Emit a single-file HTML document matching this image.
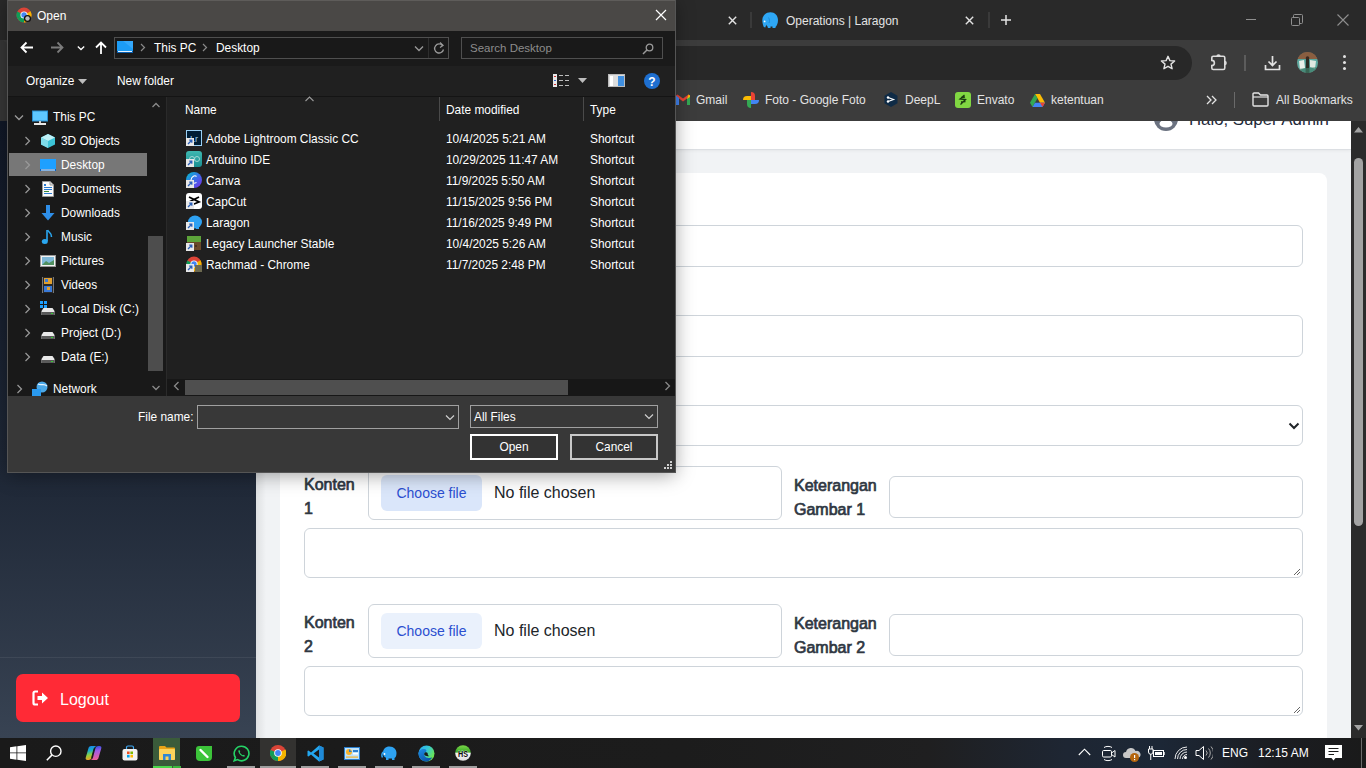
<!DOCTYPE html>
<html><head><meta charset="utf-8">
<style>
*{box-sizing:border-box;margin:0;padding:0}
html,body{width:1366px;height:768px;overflow:hidden;background:#292929;font-family:"Liberation Sans",sans-serif}
.a{position:absolute}
#tabs{left:0;top:0;width:1366px;height:40px;background:#292929}
#toolbar{left:0;top:40px;width:1366px;height:81px;background:#3c3c3c}
#omni{left:100px;top:46px;width:1092px;height:34px;border-radius:17px;background:#282828}
.w{color:#e3e3e3;font-size:12px;white-space:nowrap}
#page{left:0;top:121px;width:1351px;height:617px;background:#f1f3f5;overflow:hidden}
#sidebar{left:0;top:0;width:256px;height:617px;background:linear-gradient(#111827,#1f2837 58%,#384353)}
#header{left:256px;top:0;width:1095px;height:29px;background:#fff;border-bottom:1px solid #dcdfe3;box-shadow:0 1px 3px rgba(0,0,0,.05)}
#card{left:280px;top:52px;width:1047px;height:700px;background:#fff;border-radius:8px}
.inp{position:absolute;border:1px solid #ced4da;border-radius:6px;background:#fff}
.lbl{position:absolute;font-size:16px;color:#343a40;line-height:24px;-webkit-text-stroke:0.7px #2f3742;color:#2f3742}
#sb{left:1351px;top:121px;width:15px;height:617px;background:#2b2b2b}
#taskbar{left:0;top:738px;width:1366px;height:30px;background:linear-gradient(90deg,#1a1a1a,#1c1c1c 50%,#1f1f20 68%,#1e2633 78%,#1c2736 85%,#1b1d22 93%,#1a1a1a)}
#dlg{left:8px;top:0;width:667px;height:472px;background:#383838;box-shadow:0 0 0 1px #555,0 3px 18px rgba(0,0,0,.38);overflow:hidden}
.d{color:#fff;font-size:11.9px;white-space:nowrap;position:absolute}
</style></head><body>
<div id="tabs" class="a"></div>
<div id="toolbar" class="a"></div>
<div id="omni" class="a"></div>
<div class="a" style="left:0;top:40px;width:8px;height:81px;background:#373737;border-top-right-radius:8px"></div>
<!-- tabs -->
<svg class="a" style="left:728px;top:16px" width="9" height="9"><path d="M0.8 0.8L8.2 8.2M8.2 0.8L0.8 8.2" stroke="#e3e3e3" stroke-width="1.4"/></svg>
<div class="a" style="left:750px;top:12px;width:2px;height:16px;background:#3a3a3a"></div>
<svg class="a" style="left:761px;top:11px" width="18" height="18" viewBox="0 0 18 18"><path d="M9.5 1.2C13.8 1.2 17 4.5 17 9C17 12.5 15.8 14.8 14.5 16V17H11.5V15.5H9.5V17H6.8V15.8C5.8 15.2 5.5 14.5 5.3 13.5L4.3 16.5L2.8 16C2.2 14.5 1.3 12 1.3 9.5C1.3 4.5 5 1.2 9.5 1.2Z" fill="#2ea7f5"/><circle cx="3.6" cy="10.4" r="0.9" fill="#fff"/><path d="M7.5 6.5C8.5 8.5 9 10 8 12" stroke="#1a84cf" stroke-width="0.8" fill="none"/></svg>
<div class="w a" style="left:786px;top:13px;line-height:16px;font-size:12px;color:#e3e3e3">Operations | Laragon</div>
<svg class="a" style="left:965px;top:16px" width="9" height="9"><path d="M0.8 0.8L8.2 8.2M8.2 0.8L0.8 8.2" stroke="#e3e3e3" stroke-width="1.4"/></svg>
<div class="a" style="left:988px;top:12px;width:2px;height:16px;background:#3a3a3a"></div>
<svg class="a" style="left:1001px;top:15px" width="10" height="10"><path d="M5 0V10M0 5H10" stroke="#e3e3e3" stroke-width="1.5"/></svg>
<div class="a" style="left:1246px;top:19px;width:10px;height:1px;background:#8f8f8f"></div>
<svg class="a" style="left:1291px;top:14px" width="12" height="12"><path d="M2.5 3.5V1.5A1 1 0 0 1 3.5 0.5H10.5A1 1 0 0 1 11.5 1.5V8.5A1 1 0 0 1 10.5 9.5H8.5" stroke="#8f8f8f" fill="none"/><rect x="0.5" y="3.5" width="8" height="8" rx="1" stroke="#8f8f8f" fill="none"/></svg>
<svg class="a" style="left:1337px;top:14px" width="12" height="12"><path d="M0.5 0.5L11.5 11.5M11.5 0.5L0.5 11.5" stroke="#8f8f8f" stroke-width="1.1"/></svg>
<!-- toolbar -->
<svg class="a" style="left:1160px;top:55px" width="16" height="16" viewBox="0 0 16 16"><path d="M8 1.3L9.9 5.6L14.6 6L11 9.1L12.1 13.7L8 11.3L3.9 13.7L5 9.1L1.4 6L6.1 5.6Z" stroke="#e3e3e3" stroke-width="1.4" fill="none" stroke-linejoin="round"/></svg>
<svg class="a" style="left:1210px;top:52px" width="20" height="20" viewBox="0 0 20 20"><path d="M3.3 4.3H13.3A1.5 1.5 0 0 1 14.8 5.8V16A1.5 1.5 0 0 1 13.3 17.5H3.3A1.5 1.5 0 0 1 1.8 16V13.6A2.6 2.6 0 0 0 1.8 8.4V5.8A1.5 1.5 0 0 1 3.3 4.3Z" stroke="#dcdcdc" stroke-width="1.6" fill="none"/><path d="M6.3 4.5A2.2 2.2 0 0 1 10.7 4.5Z" fill="#dcdcdc"/><path d="M14.6 8.8A2.2 2.2 0 0 1 14.6 13.2Z" fill="#dcdcdc"/></svg>
<div class="a" style="left:1244px;top:55px;width:2px;height:16px;background:#5c5c5c"></div>
<svg class="a" style="left:1264px;top:55px" width="17" height="16" viewBox="0 0 17 16"><path d="M8.5 1V10M4.5 6.5L8.5 10.5L12.5 6.5M1.5 10V14.5H15.5V10" stroke="#e3e3e3" stroke-width="1.7" fill="none"/></svg>
<svg class="a" style="left:1297px;top:52px" width="21" height="21" viewBox="0 0 21 21"><defs><clipPath id="av"><circle cx="10.5" cy="10.5" r="10.5"/></clipPath></defs><g clip-path="url(#av)"><rect width="21" height="21" fill="#7a6a58"/><rect y="0" width="21" height="7" fill="#8a5e40"/><path d="M0 7H21V21H0Z" fill="#5aa8a0"/><path d="M2 9L7 8L8 16L3 18Z" fill="#e8efe8"/><path d="M13 8L19 9L18 17L13 15Z" fill="#dfe8e0"/><path d="M9 6H12L12.5 21H8.5Z" fill="#2a2a22"/><circle cx="10.5" cy="6" r="1.8" fill="#3a2a20"/><path d="M0 17L21 15V21H0Z" fill="#3f7f6a" opacity=".7"/></g></svg>
<div class="a" style="left:1343px;top:55px;width:3px;height:3px;border-radius:50%;background:#e3e3e3;box-shadow:0 6px 0 #e3e3e3,0 12px 0 #e3e3e3"></div>
<!-- bookmarks -->
<svg class="a" style="left:676px;top:94px" width="14" height="11" viewBox="0 0 14 11"><path d="M0 1.5V11H3V4.5L7 7.5L11 4.5V11H14V1.5L12.5 0.5L7 4.5L1.5 0.5Z" fill="#ea4335"/><path d="M0 1.5V11H3V4Z" fill="#4285f4"/><path d="M11 4V11H14V1.5Z" fill="#34a853"/><path d="M12.5 0.5L14 1.5V3L11 5Z" fill="#fbbc04"/></svg>
<div class="w a" style="left:696px;top:92px;line-height:16px">Gmail</div>
<svg class="a" style="left:743px;top:92px" width="16" height="16" viewBox="0 0 16 16"><path d="M4 8A4 4 0 0 1 8 4V8Z" fill="#fbbc04"/><path d="M8 0A4 4 0 0 1 12 4V8H8Z" fill="#ea4335"/><path d="M8 8H16A4 4 0 0 1 12 12H8Z" fill="#4285f4"/><path d="M8 8V16A4 4 0 0 1 4 12V8Z" fill="#34a853"/><path d="M0 8A4 4 0 0 1 4 4H8V8Z" fill="#fbbc04"/></svg>
<div class="w a" style="left:765px;top:92px;line-height:16px">Foto - Google Foto</div>
<svg class="a" style="left:884px;top:92px" width="14" height="15" viewBox="0 0 14 15"><path d="M7 0L13.5 3.7V11.3L7 15L0.5 11.3V3.7Z" fill="#0f2b46"/><path d="M4 5.5L9.5 7.5L4 9.5" stroke="#fff" stroke-width="1.2" fill="none"/><circle cx="4" cy="5.5" r="1.2" fill="#fff"/><circle cx="4" cy="9.5" r="1.2" fill="#fff"/></svg>
<div class="w a" style="left:905px;top:92px;line-height:16px">DeepL</div>
<svg class="a" style="left:955px;top:92px" width="16" height="16" viewBox="0 0 16 16"><rect width="16" height="16" rx="3" fill="#81d742"/><path d="M9.5 3L5 7L10.5 7.5L5.5 12.5M6 5.5L10 5M6 10L10.5 9.5" stroke="#1a3a10" stroke-width="1.3" fill="none"/></svg>
<div class="w a" style="left:977px;top:92px;line-height:16px">Envato</div>
<svg class="a" style="left:1030px;top:94px" width="15" height="13" viewBox="0 0 15 13"><path d="M5 0H10L15 8.7H10Z" fill="#fbbc04"/><path d="M5 0L0 8.7L2.5 13L7.5 4.3Z" fill="#34a853"/><path d="M2.5 13H12.5L15 8.7H5Z" fill="#4285f4"/><path d="M12.5 13L15 8.7H10Z" fill="#ea4335"/></svg>
<div class="w a" style="left:1051px;top:92px;line-height:16px">ketentuan</div>
<svg class="a" style="left:1206px;top:95px" width="12" height="10"><path d="M1 1L5 5L1 9M6 1L10 5L6 9" stroke="#e3e3e3" stroke-width="1.3" fill="none"/></svg>
<div class="a" style="left:1234px;top:92px;width:1px;height:16px;background:#6a6a6a"></div>
<svg class="a" style="left:1252px;top:92px" width="17" height="15" viewBox="0 0 17 15"><path d="M1 2A1 1 0 0 1 2 1H6.5L8.5 3H15A1 1 0 0 1 16 4V13A1 1 0 0 1 15 14H2A1 1 0 0 1 1 13Z" stroke="#e3e3e3" stroke-width="1.4" fill="none"/><path d="M1 5H16" stroke="#e3e3e3" stroke-width="1.2"/></svg>
<div class="w a" style="left:1276px;top:92px;line-height:16px">All Bookmarks</div>

<div id="page" class="a">
  <div id="sidebar" class="a"></div>
  <div class="a" style="left:256px;top:0;width:10px;height:617px;background:linear-gradient(90deg,rgba(0,0,0,.08),rgba(0,0,0,0))"></div>
  <div class="a" style="left:0;top:536px;width:256px;height:1px;background:rgba(255,255,255,.07)"></div>
  <div class="a" style="left:16px;top:553px;width:224px;height:48px;border-radius:7px;background:#ff2a36"></div>
  <svg class="a" style="left:32px;top:569px" width="17" height="16" viewBox="0 0 17 16"><path d="M6 1.5H3A1.5 1.5 0 0 0 1.5 3V13A1.5 1.5 0 0 0 3 14.5H6" stroke="#fff" stroke-width="2.2" fill="none"/><path d="M5.5 6H10V2.5L16 8L10 13.5V10H5.5Z" fill="#fff"/></svg>
  <div class="a" style="left:60px;top:568px;line-height:22px;font-size:16px;color:#fff">Logout</div>
  <div id="header" class="a">
    <svg class="a" style="left:898px;top:-14px" width="24" height="24" viewBox="0 0 24 24"><circle cx="12" cy="12" r="12" fill="#6b7280"/><ellipse cx="12" cy="16.7" rx="6.5" ry="3.8" fill="#fff"/><circle cx="12" cy="8" r="4" fill="#fff"/></svg>
    <div class="a" style="left:933px;top:-12px;line-height:22px;font-size:16.8px;color:#1e2a3a;white-space:nowrap">Halo, Super Admin</div>
  </div>
  <div id="card" class="a">
    <div class="inp" style="left:24px;top:52px;width:999px;height:42px"></div>
    <div class="inp" style="left:24px;top:142px;width:999px;height:42px"></div>
    <div class="inp" style="left:24px;top:232px;width:999px;height:41px"></div>
    <svg class="a" style="left:1008px;top:249px" width="12" height="8"><path d="M1.5 1.5L6 6L10.5 1.5" stroke="#212529" stroke-width="2" fill="none"/></svg>
    <div class="lbl" style="left:24px;top:300px;width:60px">Konten<br>1</div>
    <div class="inp" style="left:88px;top:293px;width:414px;height:54px"></div>
    <div class="a" style="left:101px;top:302px;width:101px;height:36px;border-radius:6px;background:#dae6fa"></div>
    <div class="a" style="left:101px;top:309px;width:101px;text-align:center;line-height:22px;font-size:14px;color:#2b4fd0">Choose file</div>
    <div class="a" style="left:214px;top:308px;line-height:22px;font-size:16px;color:#212529;white-space:nowrap;margin-top:1px">No file chosen</div>
    <div class="lbl" style="left:514px;top:301px;width:100px">Keterangan<br>Gambar 1</div>
    <div class="inp" style="left:609px;top:303px;width:414px;height:42px"></div>
    <div class="inp" style="left:24px;top:355px;width:999px;height:50px"></div>
    <svg class="a" style="left:1013px;top:395px" width="8" height="8"><path d="M7 1L1 7M7 4L4 7" stroke="#555" stroke-width="0.9"/></svg>
    <div class="lbl" style="left:24px;top:438px;width:60px">Konten<br>2</div>
    <div class="inp" style="left:88px;top:431px;width:414px;height:54px"></div>
    <div class="a" style="left:101px;top:440px;width:101px;height:36px;border-radius:6px;background:#eaf1fc"></div>
    <div class="a" style="left:101px;top:447px;width:101px;text-align:center;line-height:22px;font-size:14px;color:#2b4fd0">Choose file</div>
    <div class="a" style="left:214px;top:446px;line-height:22px;font-size:16px;color:#212529;white-space:nowrap;margin-top:1px">No file chosen</div>
    <div class="lbl" style="left:514px;top:439px;width:100px">Keterangan<br>Gambar 2</div>
    <div class="inp" style="left:609px;top:441px;width:414px;height:42px"></div>
    <div class="inp" style="left:24px;top:493px;width:999px;height:50px"></div>
    <svg class="a" style="left:1013px;top:533px" width="8" height="8"><path d="M7 1L1 7M7 4L4 7" stroke="#555" stroke-width="0.9"/></svg>
  </div>
</div>
<div id="sb" class="a">
  <svg class="a" style="left:3px;top:6px" width="9" height="6"><path d="M0 5.5H9L4.5 0Z" fill="#a3a3a3"/></svg>
  <div class="a" style="left:3px;top:37px;width:9px;height:368px;border-radius:4.5px;background:#a3a3a3"></div>
  <svg class="a" style="left:3px;top:604px" width="9" height="6"><path d="M0 0H9L4.5 5.5Z" fill="#a3a3a3"/></svg>
</div>
<div id="taskbar" class="a">
 <svg class="a" style="left:10px;top:7px" width="16" height="16" viewBox="0 0 16 16"><path d="M0 2.2L6.5 1.3V7.5H0ZM7.3 1.2L16 0V7.5H7.3ZM0 8.3H6.5V14.7L0 13.8ZM7.3 8.3H16V16L7.3 14.8Z" fill="#fff"/></svg>
 <svg class="a" style="left:46px;top:7px" width="16" height="16" viewBox="0 0 16 16"><circle cx="9.8" cy="6.2" r="5.2" stroke="#fff" stroke-width="1.4" fill="none"/><path d="M6.1 9.9L0.8 15.2" stroke="#fff" stroke-width="1.5"/></svg>
 <svg class="a" style="left:85px;top:7px" width="17" height="16" viewBox="0 0 17 16"><defs><linearGradient id="cpl" x1="0.2" y1="0" x2="0.4" y2="1"><stop offset="0" stop-color="#1b7ff0"/><stop offset=".35" stop-color="#19b0c8"/><stop offset=".65" stop-color="#8fd040"/><stop offset="1" stop-color="#f59a20"/></linearGradient><linearGradient id="cpr" x1="0.5" y1="0" x2="0.6" y2="1"><stop offset="0" stop-color="#2a4fe0"/><stop offset=".35" stop-color="#a05ce8"/><stop offset="1" stop-color="#f26090"/></linearGradient></defs><path d="M6 1H11.5C10 1.5 9.3 2.5 9 3.5L6.5 13C6.1 14.3 5 15 3.8 15H2.2C1 15 0.3 14 0.7 12.8L3.6 2.8C4 1.7 5 1 6 1Z" fill="url(#cpl)"/><path d="M11 15H5.5C7 14.5 7.7 13.5 8 12.5L10.5 3C10.9 1.7 12 1 13.2 1H14.8C16 1 16.7 2 16.3 3.2L13.4 13.2C13 14.3 12 15 11 15Z" fill="url(#cpr)"/><path d="M9.2 3.2L6.6 12.8" stroke="#161616" stroke-width="0.9"/></svg>
 <svg class="a" style="left:122px;top:7px" width="16" height="16" viewBox="0 0 16 16"><path d="M4.5 4V2.5A1.5 1.5 0 0 1 6 1H10A1.5 1.5 0 0 1 11.5 2.5V4" stroke="#3fa9f5" stroke-width="1.2" fill="none"/><rect x="0.5" y="4" width="15" height="11.5" rx="2" fill="#f3f3f3"/><rect x="5" y="6.5" width="2.6" height="2.6" fill="#f25022"/><rect x="8.4" y="6.5" width="2.6" height="2.6" fill="#7fba00"/><rect x="5" y="9.9" width="2.6" height="2.6" fill="#00a4ef"/><rect x="8.4" y="9.9" width="2.6" height="2.6" fill="#ffb900"/></svg>
 <div class="a" style="left:153px;top:0;width:27px;height:30px;background:#3a5b3a"></div>
 <div class="a" style="left:153px;top:28px;width:19px;height:2px;background:#4bd84b"></div>
 <div class="a" style="left:173px;top:28px;width:8px;height:2px;background:#3bb83b"></div>
 <svg class="a" style="left:159px;top:8px" width="16" height="14" viewBox="0 0 16 14"><path d="M0 1A1 1 0 0 1 1 0H6L7.5 1.5H15A1 1 0 0 1 16 2.5V13A1 1 0 0 1 15 14H1A1 1 0 0 1 0 13Z" fill="#e8a317"/><rect x="0" y="3" width="16" height="11" rx="1" fill="#fbd25c"/><path d="M4 14V8H12V14H9.5V10.5H6.5V14Z" fill="#2f86d6"/></svg>
 <svg class="a" style="left:196px;top:8px" width="16" height="15" viewBox="0 0 16 15"><path d="M3 0H16V11A4 4 0 0 1 12 15H4A4 4 0 0 1 0 11V3A3 3 0 0 1 3 0Z" fill="#3cc43a"/><path d="M4.5 4L11.5 11" stroke="#fff" stroke-width="2.4" stroke-linecap="round"/></svg>
 <svg class="a" style="left:233px;top:7px" width="17" height="17" viewBox="0 0 17 17"><path d="M8.5 1.2A7.3 7.3 0 1 1 4.6 14.6L1.2 15.8L2.4 12.5A7.3 7.3 0 0 1 8.5 1.2Z" stroke="#25d366" stroke-width="1.6" fill="none"/><path d="M6 5C5.5 5.3 5.2 6 5.5 7C6.2 9 8 10.8 10 11.5C11 11.8 11.7 11.4 12 11L11 9.8L9.8 10.3C8.6 9.7 7.4 8.5 6.8 7.3L7.3 6.1Z" fill="#25d366"/></svg>
 <div class="a" style="left:227px;top:28px;width:28px;height:2px;background:#9f9f9f"></div>
 <div class="a" style="left:260px;top:0;width:36px;height:30px;background:#333230"></div>
 <div class="a" style="left:260px;top:28px;width:36px;height:2px;background:#9f9f9f"></div>
 <svg class="a" style="left:270px;top:7px" width="16" height="16" viewBox="0 0 16 16"><circle cx="8" cy="8" r="8" fill="#db4437"/><path d="M8 8L1.07 12A8 8 0 0 1 0.5 5Z" fill="#0f9d58"/><path d="M8 8L15.5 4.5A8 8 0 0 1 8 16Z" fill="#f4b400"/><path d="M8 8V16A8 8 0 0 1 1.07 12Z" fill="#0f9d58"/><circle cx="8" cy="8" r="3.8" fill="#fff"/><circle cx="8" cy="8" r="2.9" fill="#4285f4"/></svg>
 <svg class="a" style="left:307px;top:7px" width="17" height="17" viewBox="0 0 17 17"><path d="M12 0.5L16.5 2.5V14.5L12 16.5L4 9.5L1.5 11.5L0.5 11V6L1.5 5.5L4 7.5Z" fill="#23a7f0"/><path d="M12 4.5V12.5L6.5 8.5Z" fill="#1a1a1a"/><path d="M12 0.5L16.5 2.5V14.5L12 16.5Z" fill="#1f8ad8"/></svg>
 <div class="a" style="left:301px;top:28px;width:28px;height:2px;background:#9f9f9f"></div>
 <svg class="a" style="left:344px;top:9px" width="16" height="13" viewBox="0 0 16 13"><rect x="0.5" y="0.5" width="15" height="12" fill="#bfe3fb" stroke="#2a7fcf"/><circle cx="5" cy="5" r="3" fill="#f6b22b"/><path d="M5 2V5H8" fill="#2a7fcf"/><rect x="9" y="3" width="5" height="2" fill="#2a7fcf"/><rect x="9" y="6" width="5" height="1.5" fill="#fff"/><rect x="2" y="9.5" width="12" height="1.2" fill="#f6b22b"/></svg>
 <div class="a" style="left:338px;top:28px;width:28px;height:2px;background:#9f9f9f"></div>
 <svg class="a" style="left:381px;top:8px" width="16" height="14" viewBox="0 0 16 14"><path d="M2 7C2 3 4.5 0.5 8.5 0.5C13 0.5 15.5 3.5 15.5 7C15.5 10 14.5 11.5 13.5 12V14H11V12.5H7.5V14H5V11.8C3 11 2 9.5 2 7Z" fill="#2ea3f2"/><path d="M2.5 6C0.8 7 0.5 9.5 1.5 11.5" stroke="#2ea3f2" stroke-width="1.6" fill="none"/><circle cx="3.5" cy="8" r="0.9" fill="#fff"/></svg>
 <div class="a" style="left:375px;top:28px;width:28px;height:2px;background:#9f9f9f"></div>
 <svg class="a" style="left:418px;top:7px" width="17" height="17" viewBox="0 0 17 17"><defs><linearGradient id="eg1" x1="0" y1="0" x2="1" y2="0.6"><stop offset="0" stop-color="#2aa8f2"/><stop offset=".5" stop-color="#35c8d8"/><stop offset="1" stop-color="#6ee84a"/></linearGradient><linearGradient id="eg2" x1="0" y1="0" x2="0.6" y2="1"><stop offset="0" stop-color="#1e8ee8"/><stop offset="1" stop-color="#0c55a8"/></linearGradient></defs><circle cx="8.5" cy="8.5" r="8" fill="url(#eg1)"/><path d="M0.5 8.5C0.5 5.5 3 4 5.5 4C8.5 4 9.5 6 7 7.5C5 8.8 6 12 9.5 12.8C11.5 13.2 13 13 14.3 12.3C13 15 10.8 16.5 8.5 16.5C4 16.5 0.5 13 0.5 8.5Z" fill="url(#eg2)"/><path d="M7 7.5C8.5 6.8 10 7.5 9.8 9.2C9.7 10.2 10.5 10.8 11.5 11C10 11.5 7 11.3 6.3 9.8C6 9 6.3 8 7 7.5Z" fill="#1a1a1a"/></svg>
 <div class="a" style="left:412px;top:28px;width:28px;height:2px;background:#9f9f9f"></div>
 <svg class="a" style="left:455px;top:7px" width="16" height="16" viewBox="0 0 16 16"><defs><linearGradient id="hs" x1="0" y1="0" x2="0" y2="1"><stop offset="0" stop-color="#7ad848"/><stop offset=".45" stop-color="#3aa828"/><stop offset=".5" stop-color="#f4f4f4"/><stop offset="1" stop-color="#dcdcdc"/></linearGradient></defs><circle cx="8" cy="8" r="7.8" fill="url(#hs)"/><text x="8" y="11.6" font-family="Liberation Sans" font-weight="bold" font-size="8.5" fill="#0a0a0a" stroke="#fff" stroke-width="0.6" paint-order="stroke" text-anchor="middle" textLength="10" lengthAdjust="spacingAndGlyphs">HS</text></svg>
 <div class="a" style="left:449px;top:28px;width:28px;height:2px;background:#9f9f9f"></div>
 <!-- tray -->
 <svg class="a" style="left:1078px;top:10px" width="13" height="8"><path d="M0.8 7L6.5 1.2L12.2 7" stroke="#fff" stroke-width="1.1" fill="none"/></svg>
 <svg class="a" style="left:1102px;top:7px" width="14" height="17" viewBox="0 0 14 17"><path d="M2 2.5C4 1 8 1 10 2.5M2 14.5C4 16 8 16 10 14.5" stroke="#fff" stroke-width="1" fill="none"/><rect x="0.5" y="5.5" width="9" height="6.5" rx="1.2" stroke="#fff" fill="none"/><path d="M9.5 8L13 5.5V12L9.5 9.5" stroke="#fff" fill="none"/></svg>
 <svg class="a" style="left:1123px;top:8px" width="18" height="16" viewBox="0 0 18 16"><path d="M3 12A3 3 0 0 1 3 6A5 5 0 0 1 12.5 5A3.5 3.5 0 0 1 15 12Z" fill="#c8c8c8"/><circle cx="11.5" cy="11.5" r="4.5" fill="#b5650d"/><rect x="11" y="9" width="1.2" height="3" fill="#fff"/><rect x="11" y="13" width="1.2" height="1.2" fill="#fff"/></svg>
 <svg class="a" style="left:1148px;top:8px" width="17" height="14" viewBox="0 0 17 14"><path d="M1.5 0V3M4 0V3M0.5 3H5V6A2.25 2.25 0 0 1 0.5 6ZM2.75 8V14" stroke="#fff" stroke-width="1" fill="none"/><rect x="5.5" y="4.5" width="10" height="6" stroke="#fff" fill="none"/><rect x="7" y="6" width="7" height="3" fill="#fff"/><rect x="15.5" y="6" width="1.2" height="3" fill="#fff"/></svg>
 <svg class="a" style="left:1174px;top:8px" width="14" height="14" viewBox="0 0 14 14"><path d="M1 13A12 12 0 0 1 13 1M3.5 13A9.5 9.5 0 0 1 13 3.5M6 13A7 7 0 0 1 13 6M8.5 13A4.5 4.5 0 0 1 13 8.5" stroke="#fff" stroke-width="0.9" fill="none"/><circle cx="11.5" cy="11.5" r="1.5" fill="#fff"/></svg>
 <svg class="a" style="left:1195px;top:7px" width="18" height="16" viewBox="0 0 18 16"><path d="M1 5.5H4L8.5 1.5V14.5L4 10.5H1Z" stroke="#fff" fill="none"/><path d="M11 5.5A3.5 3.5 0 0 1 11 10.5M13.5 3.5A6.5 6.5 0 0 1 13.5 12.5M16 1.5A9.5 9.5 0 0 1 16 14.5" stroke="#aaa" fill="none"/></svg>
 <div class="a" style="left:1222px;top:7px;line-height:16px;font-size:12px;color:#fff">ENG</div>
 <div class="a" style="left:1258px;top:7px;line-height:16px;font-size:12px;color:#fff;white-space:nowrap">12:15 AM</div>
 <svg class="a" style="left:1325px;top:7px" width="17" height="17" viewBox="0 0 17 17"><path d="M0 0H17V13H10.5L8.5 15.5L6.5 13H0Z" fill="#fff"/><path d="M3.5 3.5H13.5M3.5 6.5H13.5M3.5 9.5H9" stroke="#1a1a1a" stroke-width="1"/></svg>
 <div class="a" style="left:1361px;top:0;width:1px;height:30px;background:#6a6a6a"></div>
</div>

<div id="dlg" class="a">
 <div class="a" style="left:0;top:0;width:669px;height:31px;background:#4a4846"></div>
 <div class="a" style="left:0;top:0;width:669px;height:1px;background:#5e5c5a"></div>
 <svg class="a" style="left:8px;top:7px" width="16" height="16" viewBox="0 0 16 16">
  <circle cx="8" cy="8" r="7.5" fill="#db4437"/>
  <path d="M8 8 L1.5 11.8 A7.5 7.5 0 0 1 1.3 4.5 Z" fill="#0f9d58"/>
  <path d="M8 8 L14.5 4.2 A7.5 7.5 0 0 1 8 15.5 L8 8Z" fill="#f4b400"/>
  <path d="M8 8 L8 15.5 A7.5 7.5 0 0 1 1.5 11.8Z" fill="#0f9d58"/>
  <circle cx="8" cy="8" r="3.6" fill="#fff"/><circle cx="8" cy="8" r="2.7" fill="#4285f4"/>
  <circle cx="11.5" cy="11.5" r="3.6" fill="#111"/><circle cx="11.5" cy="11.5" r="2.2" fill="#bbb"/>
 </svg>
 <div class="d" style="left:29px;top:8px;line-height:16px;font-size:12px">Open</div>
 <svg class="a" style="left:647px;top:9px" width="12" height="12"><path d="M1 1L11 11M11 1L1 11" stroke="#fff" stroke-width="1.2"/></svg>
 <!-- nav bar -->
 <div class="a" style="left:0;top:31px;width:669px;height:35px;background:#1a1a1a"></div>
 <svg class="a" style="left:12px;top:41px" width="14" height="14"><path d="M6.5 1.5L1.5 6.5L6.5 11.5M1.5 6.5H13" stroke="#fff" stroke-width="1.8" fill="none"/></svg>
 <svg class="a" style="left:42px;top:41px" width="14" height="14"><path d="M7.5 1.5L12.5 6.5L7.5 11.5M12.5 6.5H1" stroke="#7c7c7c" stroke-width="1.8" fill="none"/></svg>
 <svg class="a" style="left:69px;top:44px" width="8" height="8"><path d="M0.8 2.5L4 5.5L7.2 2.5" stroke="#fff" stroke-width="1.3" fill="none"/></svg>
 <svg class="a" style="left:87px;top:41px" width="12" height="14"><path d="M1 6.5L6 1.5L11 6.5M6 1.5V13" stroke="#fff" stroke-width="1.8" fill="none"/></svg>
 <div class="a" style="left:106px;top:37px;width:335px;height:22px;border:1px solid #4f4f4f;background:#191919"></div>
 <svg class="a" style="left:109px;top:41px" width="16" height="12"><rect width="16" height="12" fill="#1c9cf6"/><path d="M6 0L16 0L16 8Z" fill="#4cb4ff" opacity=".5"/><rect y="10" width="16" height="2" fill="#0a5fb0"/><rect x="1" y="10" width="14" height="1" fill="#e8f4ff"/></svg>
 <svg class="a" style="left:132px;top:43px" width="6" height="9"><path d="M1 1L4.5 4.5L1 8" stroke="#8a8a8a" stroke-width="1.2" fill="none"/></svg>
 <div class="d" style="left:146px;top:40px;line-height:16px">This PC</div>
 <svg class="a" style="left:194px;top:43px" width="6" height="9"><path d="M1 1L4.5 4.5L1 8" stroke="#8a8a8a" stroke-width="1.2" fill="none"/></svg>
 <div class="d" style="left:208px;top:40px;line-height:16px">Desktop</div>
 <svg class="a" style="left:406px;top:45px" width="10" height="8"><path d="M1 1.5L5 5.5L9 1.5" stroke="#9a9a9a" stroke-width="1.3" fill="none"/></svg>
 <div class="a" style="left:420px;top:38px;width:1px;height:20px;background:#2e2e2e"></div>
 <svg class="a" style="left:425px;top:41px" width="12" height="14"><path d="M9.5 4.5A4.5 4.5 0 1 0 10.5 8.5" stroke="#9a9a9a" stroke-width="1.3" fill="none"/><path d="M7 1.5L10 4.5L7 6.5" stroke="#9a9a9a" stroke-width="1.3" fill="none"/></svg>
 <div class="a" style="left:453px;top:37px;width:202px;height:22px;border:1px solid #4f4f4f;background:#191919"></div>
 <div class="d" style="left:462px;top:40px;line-height:16px;color:#8c8c8c;font-size:11.5px">Search Desktop</div>
 <svg class="a" style="left:634px;top:43px" width="12" height="12"><circle cx="7.5" cy="4.5" r="3.3" stroke="#9a9a9a" stroke-width="1.3" fill="none"/><path d="M5.2 6.8L1 11" stroke="#9a9a9a" stroke-width="1.5"/></svg>
 <!-- command bar -->
 <div class="a" style="left:0;top:66px;width:669px;height:30px;background:#202020"></div>
 <div class="d" style="left:18px;top:73px;line-height:16px">Organize</div>
 <svg class="a" style="left:70px;top:79px" width="9" height="6"><path d="M0 0H9L4.5 5Z" fill="#bdbdbd"/></svg>
 <div class="d" style="left:109px;top:73px;line-height:16px">New folder</div>
 <svg class="a" style="left:545px;top:74px" width="17" height="13"><rect x="0" y="0" width="4" height="13" fill="#e8e8e8"/><rect x="1" y="2" width="2" height="1" fill="#c33"/><rect x="1" y="6" width="2" height="1" fill="#36c"/><rect x="1" y="10" width="2" height="1" fill="#c33"/><path d="M6 1.5h4M12 1.5h4M6 6.5h4M12 6.5h4M6 11.5h4M12 11.5h4" stroke="#bdbdbd" stroke-width="1"/></svg>
 <svg class="a" style="left:570px;top:78px" width="9" height="6"><path d="M0 0H9L4.5 5Z" fill="#bdbdbd"/></svg>
 <svg class="a" style="left:600px;top:74px" width="17" height="13"><rect x="0.5" y="0.5" width="16" height="12" fill="#ddd" stroke="#bbb"/><rect x="2" y="2" width="3" height="10" fill="#fff"/><rect x="10" y="2" width="6" height="10" fill="#3f8fe0"/></svg>
 <svg class="a" style="left:636px;top:73px" width="16" height="16"><circle cx="8" cy="8" r="8" fill="#1e6fd0"/><text x="8" y="12.5" font-family="Liberation Sans" font-weight="bold" font-size="12" fill="#fff" text-anchor="middle">?</text></svg>
 <!-- content -->
 <div class="a" style="left:0;top:96px;width:669px;height:300px;background:#202020"></div>
 <div class="a" style="left:0;top:96px;width:158px;height:300px;background:#191919"></div>
 <div class="a" style="left:158px;top:96px;width:1px;height:300px;background:#2a2a2a"></div>
 <div class="a" style="left:0;top:96px;width:669px;height:1px;background:#141414"></div>
 <div class="a" style="left:140px;top:236px;width:15px;height:135px;background:#4d4d4d"></div>
 <svg class="a" style="left:144px;top:102px" width="8" height="6"><path d="M0.5 5L4 1.5L7.5 5" stroke="#8a8a8a" stroke-width="1.3" fill="none"/></svg>
 <svg class="a" style="left:144px;top:385px" width="8" height="6"><path d="M0.5 1L4 4.5L7.5 1" stroke="#8a8a8a" stroke-width="1.3" fill="none"/></svg>
 <div class="a" style="left:1px;top:153px;width:138px;height:23px;background:#777"></div>
 <svg class="a" style="left:6px;top:114px" width="10" height="8"><path d="M1 1.5L5 5.5L9 1.5" stroke="#9a9a9a" stroke-width="1.3" fill="none"/></svg>
 <svg class="a" style="left:24px;top:110px" width="16" height="16"><rect x="0.5" y="1" width="15" height="10" fill="#5ec8ff" stroke="#2a8fd0"/><rect x="7" y="11" width="2" height="2" fill="#ccc"/><rect x="2" y="13" width="12" height="2" fill="#e6e6e6"/></svg>
 <div class="d" style="left:45px;top:109px;line-height:16px">This PC</div>
 <svg class="a" style="left:16px;top:136px" width="7" height="10"><path d="M1.5 1L5.5 5L1.5 9" stroke="#9a9a9a" stroke-width="1.2" fill="none"/></svg>
 <svg class="a" style="left:32px;top:133px" width="16" height="16"><path d="M8 1L15 4.5V11.5L8 15L1 11.5V4.5Z" fill="#3cc3d6"/><path d="M8 1L15 4.5L8 8L1 4.5Z" fill="#bff0f7"/><path d="M1 4.5L8 8V15L1 11.5Z" fill="#7fdcea"/></svg>
 <div class="d" style="left:53px;top:133px;line-height:16px">3D Objects</div>
 <svg class="a" style="left:16px;top:160px" width="7" height="10"><path d="M1.5 1L5.5 5L1.5 9" stroke="#9a9a9a" stroke-width="1.2" fill="none"/></svg>
 <svg class="a" style="left:32px;top:157px" width="16" height="16"><rect x="0" y="2" width="16" height="12" fill="#1ea0ff"/><rect x="0" y="12" width="16" height="2" fill="#0a62c0"/><rect x="1" y="12.5" width="14" height="1" fill="#fff"/></svg>
 <div class="d" style="left:53px;top:157px;line-height:16px">Desktop</div>
 <svg class="a" style="left:16px;top:184px" width="7" height="10"><path d="M1.5 1L5.5 5L1.5 9" stroke="#9a9a9a" stroke-width="1.2" fill="none"/></svg>
 <svg class="a" style="left:32px;top:181px" width="16" height="16"><path d="M2.5 0.5H10L13.5 4V15.5H2.5Z" fill="#fafafa" stroke="#9a9a9a"/><path d="M10 0.5V4H13.5" fill="#ddd" stroke="#9a9a9a"/><g shape-rendering="crispEdges"><rect x="4" y="3" width="2" height="2" fill="#2a7ad0"/><rect x="4" y="6" width="8" height="1" fill="#2a7ad0"/><rect x="4" y="8" width="8" height="1" fill="#2a7ad0"/><rect x="4" y="10" width="5" height="1" fill="#3a8a3a"/><rect x="4" y="12" width="8" height="1" fill="#2a7ad0"/></g></svg>
 <div class="d" style="left:53px;top:181px;line-height:16px">Documents</div>
 <svg class="a" style="left:16px;top:208px" width="7" height="10"><path d="M1.5 1L5.5 5L1.5 9" stroke="#9a9a9a" stroke-width="1.2" fill="none"/></svg>
 <svg class="a" style="left:32px;top:205px" width="16" height="16"><path d="M6 0H10V8H14.5L8 15.5L1.5 8H6Z" fill="#2e8ee8"/></svg>
 <div class="d" style="left:53px;top:205px;line-height:16px">Downloads</div>
 <svg class="a" style="left:16px;top:232px" width="7" height="10"><path d="M1.5 1L5.5 5L1.5 9" stroke="#9a9a9a" stroke-width="1.2" fill="none"/></svg>
 <svg class="a" style="left:32px;top:229px" width="16" height="16"><path d="M7 1V12" stroke="#2aa7f0" stroke-width="1.6"/><ellipse cx="4.8" cy="12.5" rx="3" ry="2.5" fill="#2aa7f0"/><path d="M7.5 1C9 4 12 4 11.5 8" stroke="#2aa7f0" stroke-width="1.6" fill="none"/></svg>
 <div class="d" style="left:53px;top:229px;line-height:16px">Music</div>
 <svg class="a" style="left:16px;top:256px" width="7" height="10"><path d="M1.5 1L5.5 5L1.5 9" stroke="#9a9a9a" stroke-width="1.2" fill="none"/></svg>
 <svg class="a" style="left:32px;top:253px" width="16" height="16"><rect x="0.5" y="2.5" width="15" height="11" fill="#f2f2f2" stroke="#999"/><rect x="2" y="4" width="12" height="8" fill="#7fb8d8"/><path d="M2 12L6 8L9 10L14 7V12Z" fill="#4f8f5f"/></svg>
 <div class="d" style="left:53px;top:253px;line-height:16px">Pictures</div>
 <svg class="a" style="left:16px;top:280px" width="7" height="10"><path d="M1.5 1L5.5 5L1.5 9" stroke="#9a9a9a" stroke-width="1.2" fill="none"/></svg>
 <svg class="a" style="left:32px;top:277px" width="16" height="16"><g shape-rendering="crispEdges"><rect x="2" y="0" width="12" height="16" fill="#2a2a2a"/><rect x="2" y="0" width="1" height="16" fill="#777"/><rect x="13" y="0" width="1" height="16" fill="#777"/><rect x="4" y="1" width="8" height="6" fill="#e0a030"/><rect x="5" y="2" width="3" height="3" fill="#3a7ad8"/><rect x="4" y="9" width="8" height="6" fill="#3a7ad8"/><rect x="7" y="10" width="3" height="3" fill="#e0a030"/></g></svg>
 <div class="d" style="left:53px;top:277px;line-height:16px">Videos</div>
 <svg class="a" style="left:16px;top:304px" width="7" height="10"><path d="M1.5 1L5.5 5L1.5 9" stroke="#9a9a9a" stroke-width="1.2" fill="none"/></svg>
 <svg class="a" style="left:32px;top:301px" width="16" height="16"><path d="M3.5 7H12.5L14.5 10V14H1.5V10Z" fill="#e8e8e8"/><rect x="1.5" y="11" width="13" height="3" fill="#5a5a5a"/><rect x="11" y="12" width="2" height="1" fill="#3c3"/><g shape-rendering="crispEdges"><rect x="0" y="0" width="3" height="3" fill="#1ea0ff"/><rect x="4" y="0" width="3" height="3" fill="#1ea0ff"/><rect x="0" y="4" width="3" height="3" fill="#1ea0ff"/><rect x="4" y="4" width="3" height="3" fill="#1ea0ff"/></g></svg>
 <div class="d" style="left:53px;top:301px;line-height:16px">Local Disk (C:)</div>
 <svg class="a" style="left:16px;top:328px" width="7" height="10"><path d="M1.5 1L5.5 5L1.5 9" stroke="#9a9a9a" stroke-width="1.2" fill="none"/></svg>
 <svg class="a" style="left:32px;top:325px" width="16" height="16"><path d="M3.5 7H12.5L14.5 10V14H1.5V10Z" fill="#e8e8e8"/><rect x="1.5" y="11" width="13" height="3" fill="#5a5a5a"/><rect x="11" y="12" width="2" height="1" fill="#3c3"/></svg>
 <div class="d" style="left:53px;top:325px;line-height:16px">Project (D:)</div>
 <svg class="a" style="left:16px;top:352px" width="7" height="10"><path d="M1.5 1L5.5 5L1.5 9" stroke="#9a9a9a" stroke-width="1.2" fill="none"/></svg>
 <svg class="a" style="left:32px;top:349px" width="16" height="16"><path d="M3.5 7H12.5L14.5 10V14H1.5V10Z" fill="#e8e8e8"/><rect x="1.5" y="11" width="13" height="3" fill="#5a5a5a"/><rect x="11" y="12" width="2" height="1" fill="#3c3"/></svg>
 <div class="d" style="left:53px;top:349px;line-height:16px">Data (E:)</div>
 <div class="a" style="left:0;top:377px;width:140px;height:19px;overflow:hidden"><svg class="a" style="left:8px;top:7px" width="7" height="10"><path d="M1.5 1L5.5 5L1.5 9" stroke="#9a9a9a" stroke-width="1.2" fill="none"/></svg><svg class="a" style="left:24px;top:4px" width="16" height="16"><circle cx="10" cy="6" r="5.5" fill="#4aa8e8"/><path d="M6 3C9 5 12 2 15 5" stroke="#e6f4ff" stroke-width="1.2" fill="none"/><rect x="0" y="8" width="9" height="7" fill="#2a9af0"/><rect x="3" y="15" width="3" height="2" fill="#ccc"/></svg><div class="d" style="left:45px;top:4px;line-height:16px">Network</div></div>
 <div class="d" style="left:177px;top:102px;line-height:16px">Name</div>
 <svg class="a" style="left:297px;top:96px" width="9" height="6"><path d="M0.5 5L4.5 1L8.5 5" stroke="#9a9a9a" stroke-width="1.1" fill="none"/></svg>
 <div class="a" style="left:431px;top:97px;width:1px;height:24px;background:#4a4a4a"></div>
 <div class="d" style="left:438px;top:102px;line-height:16px">Date modified</div>
 <div class="a" style="left:575px;top:97px;width:1px;height:24px;background:#4a4a4a"></div>
 <div class="d" style="left:582px;top:102px;line-height:16px">Type</div>
 <svg class="a" style="left:178px;top:130px" width="16" height="16"><rect x="0.5" y="0.5" width="15" height="15" fill="#001e36" stroke="#9bd0f5"/><text x="8" y="12" font-family="Liberation Sans" font-size="9" fill="#9bd0f5" text-anchor="middle">Lr</text><rect x="0" y="8" width="8" height="8" fill="#e8e8e8"/><path d="M2 14L5.5 10.5M3.2 10.2H5.8V12.8" stroke="#2a5fb8" stroke-width="1.3" fill="none"/></svg>
 <div class="d" style="left:198px;top:131px;line-height:16px">Adobe Lightroom Classic CC</div>
 <div class="d" style="left:438px;top:131px;line-height:16px">10/4/2025 5:21 AM</div>
 <div class="d" style="left:582px;top:131px;line-height:16px">Shortcut</div>
 <svg class="a" style="left:178px;top:151px" width="16" height="16"><defs><linearGradient id="ard" x1="0" y1="0" x2="0" y2="1"><stop offset="0" stop-color="#3fb8b0"/><stop offset="1" stop-color="#1a8f92"/></linearGradient></defs><rect x="0" y="0" width="16" height="16" rx="3" fill="url(#ard)"/><circle cx="6" cy="8" r="2.5" stroke="#9fd8d4" fill="none"/><circle cx="11" cy="8" r="2.5" stroke="#9fd8d4" fill="none"/><rect x="0" y="8" width="8" height="8" fill="#e8e8e8"/><path d="M2 14L5.5 10.5M3.2 10.2H5.8V12.8" stroke="#2a5fb8" stroke-width="1.3" fill="none"/></svg>
 <div class="d" style="left:198px;top:152px;line-height:16px">Arduino IDE</div>
 <div class="d" style="left:438px;top:152px;line-height:16px">10/29/2025 11:47 AM</div>
 <div class="d" style="left:582px;top:152px;line-height:16px">Shortcut</div>
 <svg class="a" style="left:178px;top:172px" width="16" height="16"><defs><linearGradient id="cva" x1="0" y1="0" x2="1" y2="1"><stop offset="0" stop-color="#00c4cc"/><stop offset=".5" stop-color="#3a6ee8"/><stop offset="1" stop-color="#7d2ae8"/></linearGradient></defs><circle cx="8" cy="8" r="8" fill="url(#cva)"/><path d="M10.5 4.5C9 3 5.5 4 5 8C4.7 11 7.5 12 10.5 10.5" stroke="#fff" stroke-width="1.1" fill="none"/><rect x="0" y="8" width="8" height="8" fill="#e8e8e8"/><path d="M2 14L5.5 10.5M3.2 10.2H5.8V12.8" stroke="#2a5fb8" stroke-width="1.3" fill="none"/></svg>
 <div class="d" style="left:198px;top:173px;line-height:16px">Canva</div>
 <div class="d" style="left:438px;top:173px;line-height:16px">11/9/2025 5:50 AM</div>
 <div class="d" style="left:582px;top:173px;line-height:16px">Shortcut</div>
 <svg class="a" style="left:178px;top:193px" width="16" height="16"><rect x="0" y="0" width="16" height="16" rx="3" fill="#fff"/><path d="M3 4L13 9L3 13M13 4L3 9" stroke="#000" stroke-width="1.8" fill="none"/><rect x="0" y="8" width="8" height="8" fill="#e8e8e8"/><path d="M2 14L5.5 10.5M3.2 10.2H5.8V12.8" stroke="#2a5fb8" stroke-width="1.3" fill="none"/></svg>
 <div class="d" style="left:198px;top:194px;line-height:16px">CapCut</div>
 <div class="d" style="left:438px;top:194px;line-height:16px">11/15/2025 9:56 PM</div>
 <div class="d" style="left:582px;top:194px;line-height:16px">Shortcut</div>
 <svg class="a" style="left:178px;top:214px" width="16" height="16"><ellipse cx="9" cy="8" rx="7" ry="6.5" fill="#2ea1f2"/><rect x="4" y="9" width="3" height="6" fill="#2ea1f2"/><rect x="10" y="10" width="3" height="5" fill="#2ea1f2"/><rect x="0" y="8" width="8" height="8" fill="#e8e8e8"/><path d="M2 14L5.5 10.5M3.2 10.2H5.8V12.8" stroke="#2a5fb8" stroke-width="1.3" fill="none"/></svg>
 <div class="d" style="left:198px;top:215px;line-height:16px">Laragon</div>
 <div class="d" style="left:438px;top:215px;line-height:16px">11/16/2025 9:49 PM</div>
 <div class="d" style="left:582px;top:215px;line-height:16px">Shortcut</div>
 <svg class="a" style="left:178px;top:235px" width="16" height="16"><rect x="1" y="1" width="14" height="14" fill="#6b4a2b"/><rect x="1" y="1" width="14" height="6" fill="#5da43a"/><rect x="3" y="8" width="2" height="2" fill="#4a3320"/><rect x="9" y="10" width="2" height="2" fill="#4a3320"/><rect x="0" y="8" width="8" height="8" fill="#e8e8e8"/><path d="M2 14L5.5 10.5M3.2 10.2H5.8V12.8" stroke="#2a5fb8" stroke-width="1.3" fill="none"/></svg>
 <div class="d" style="left:198px;top:236px;line-height:16px">Legacy Launcher Stable</div>
 <div class="d" style="left:438px;top:236px;line-height:16px">10/4/2025 5:26 AM</div>
 <div class="d" style="left:582px;top:236px;line-height:16px">Shortcut</div>
 <svg class="a" style="left:178px;top:256px" width="16" height="16"><circle cx="8" cy="8" r="7.5" fill="#db4437"/><path d="M8 8L1.5 11.8A7.5 7.5 0 0 1 1.3 4.5Z" fill="#0f9d58"/><path d="M8 8L14.5 4.2A7.5 7.5 0 0 1 8 15.5Z" fill="#f4b400"/><path d="M8 8L8 15.5A7.5 7.5 0 0 1 1.5 11.8Z" fill="#0f9d58"/><circle cx="8" cy="8" r="3.6" fill="#fff"/><circle cx="8" cy="8" r="2.7" fill="#4285f4"/><rect x="9" y="9" width="7" height="7" fill="#6d6a50"/><rect x="0" y="8" width="8" height="8" fill="#e8e8e8"/><path d="M2 14L5.5 10.5M3.2 10.2H5.8V12.8" stroke="#2a5fb8" stroke-width="1.3" fill="none"/></svg>
 <div class="d" style="left:198px;top:257px;line-height:16px">Rachmad - Chrome</div>
 <div class="d" style="left:438px;top:257px;line-height:16px">11/7/2025 2:48 PM</div>
 <div class="d" style="left:582px;top:257px;line-height:16px">Shortcut</div>
 <!-- h scroll -->
 <div class="a" style="left:159px;top:379px;width:510px;height:17px;background:#171717"></div>
 <div class="a" style="left:177px;top:380px;width:383px;height:15px;background:#4f4f4f"></div>
 <svg class="a" style="left:165px;top:381px" width="7" height="10"><path d="M5.5 1L1.5 5L5.5 9" stroke="#8a8a8a" stroke-width="1.3" fill="none"/></svg>
 <svg class="a" style="left:656px;top:381px" width="7" height="10"><path d="M1.5 1L5.5 5L1.5 9" stroke="#8a8a8a" stroke-width="1.3" fill="none"/></svg>
 <!-- bottom -->
 <div class="d" style="left:130px;top:409px;line-height:16px">File name:</div>
 <div class="a" style="left:189px;top:405px;width:262px;height:24px;border:1px solid #a0a0a0"></div>
 <svg class="a" style="left:437px;top:414px" width="10" height="7"><path d="M1 1.5L5 5.5L9 1.5" stroke="#cfcfcf" stroke-width="1.2" fill="none"/></svg>
 <div class="a" style="left:462px;top:405px;width:188px;height:23px;border:1px solid #a0a0a0"></div>
 <div class="d" style="left:466px;top:409px;line-height:16px">All Files</div>
 <svg class="a" style="left:636px;top:413px" width="10" height="7"><path d="M1 1.5L5 5.5L9 1.5" stroke="#cfcfcf" stroke-width="1.2" fill="none"/></svg>
 <div class="a" style="left:462px;top:434px;width:88px;height:26px;border:2px solid #fff;background:#333"></div>
 <div class="d" style="left:462px;top:439px;width:88px;text-align:center;line-height:16px">Open</div>
 <div class="a" style="left:562px;top:434px;width:88px;height:26px;border:2px solid #c8c8c8;background:#333"></div>
 <div class="d" style="left:562px;top:439px;width:88px;text-align:center;line-height:16px">Cancel</div>
 <svg class="a" style="left:656px;top:461px" width="9" height="9"><path d="M6 0h2v2h-2zM3 3h2v2h-2zM6 3h2v2h-2zM0 6h2v2h-2zM3 6h2v2h-2zM6 6h2v2h-2z" fill="#cfcfcf"/></svg>
</div>

</body></html>
